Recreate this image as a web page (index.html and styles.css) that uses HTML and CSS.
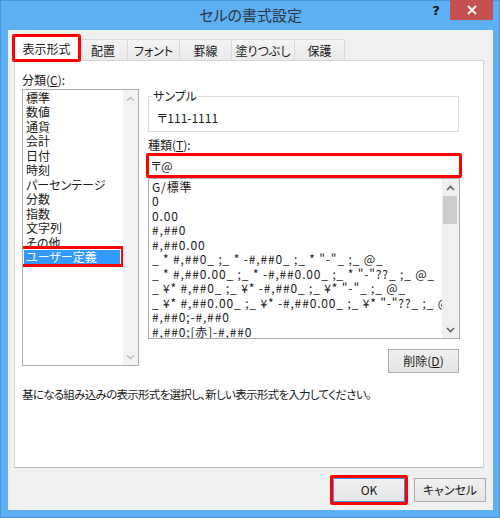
FILE: index.html
```html
<!DOCTYPE html>
<html lang="ja">
<head>
<meta charset="utf-8">
<title>セルの書式設定</title>
<link rel="stylesheet" href="styles.css">
</head>
<body>
<div class="window">
  <div class="titlebar">
    <div class="title-spacer"></div>
    <div class="title">セルの書式設定</div>
    <div class="controls">
      <span class="help">?</span>
      <span class="close"><svg width="10" height="10" viewBox="0 0 10 10"><path d="M1 1 L9 9 M9 1 L1 9" stroke="#fff" stroke-width="1.8" fill="none"/></svg></span>
    </div>
  </div>
  <div class="client">
    <div class="tabs">
      <div class="tab active hl">表示形式</div>
      <div class="tab">配置</div>
      <div class="tab">フォント</div>
      <div class="tab">罫線</div>
      <div class="tab">塗りつぶし</div>
      <div class="tab">保護</div>
    </div>
    <div class="panel">
      <div class="label">分類(<u>C</u>):</div>
      <div class="main">
        <div class="listbox cat">
          <ul class="items">
            <li>標準</li>
            <li>数値</li>
            <li>通貨</li>
            <li>会計</li>
            <li>日付</li>
            <li>時刻</li>
            <li>パーセンテージ</li>
            <li>分数</li>
            <li>指数</li>
            <li>文字列</li>
            <li>その他</li>
            <li class="selected hl">ユーザー定義</li>
          </ul>
          <div class="scrollbar disabled">
            <div class="arrow"><svg width="9" height="6" viewBox="0 0 9 6"><polyline points="1,5 4.5,1.5 8,5" fill="none" stroke="currentColor" stroke-width="1.6"/></svg></div>
            <div class="track"></div>
            <div class="arrow"><svg width="9" height="6" viewBox="0 0 9 6"><polyline points="1,1 4.5,4.5 8,1" fill="none" stroke="currentColor" stroke-width="1.6"/></svg></div>
          </div>
        </div>
        <div class="right">
          <fieldset class="sample">
            <legend>サンプル</legend>
            <div class="sample-text">〒111-1111</div>
          </fieldset>
          <div class="label label-type">種類(<u>T</u>):</div>
          <div class="input hl">〒@</div>
          <div class="listbox types">
            <ul class="items">
              <li>G/標準</li>
              <li>0</li>
              <li>0.00</li>
              <li>#,##0</li>
              <li>#,##0.00</li>
              <li>_ * #,##0_ ;_ * -#,##0_ ;_ * "-"_ ;_ @_</li>
              <li>_ * #,##0.00_ ;_ * -#,##0.00_ ;_ * "-"??_ ;_ @_</li>
              <li>_ ¥* #,##0_ ;_ ¥* -#,##0_ ;_ ¥* "-"_ ;_ @_</li>
              <li>_ ¥* #,##0.00_ ;_ ¥* -#,##0.00_ ;_ ¥* "-"??_ ;_ @_</li>
              <li>#,##0;-#,##0</li>
              <li>#,##0;[赤]-#,##0</li>
            </ul>
            <div class="scrollbar">
              <div class="arrow"><svg width="9" height="6" viewBox="0 0 9 6"><polyline points="1,5 4.5,1.5 8,5" fill="none" stroke="currentColor" stroke-width="1.6"/></svg></div>
              <div class="track"><div class="thumb"></div></div>
              <div class="arrow"><svg width="9" height="6" viewBox="0 0 9 6"><polyline points="1,1 4.5,4.5 8,1" fill="none" stroke="currentColor" stroke-width="1.6"/></svg></div>
            </div>
          </div>
          <div class="btn-row"><button class="btn btn-delete">削除(<u>D</u>)</button></div>
        </div>
      </div>
      <p class="desc">基になる組み込みの表示形式を選択し、新しい表示形式を入力してください。</p>
    </div>
    <div class="footer">
      <button class="btn btn-ok hl">OK</button>
      <button class="btn">キャンセル</button>
    </div>
  </div>
</div>
</body>
</html>
```

FILE: styles.css
```css
* { box-sizing: border-box; }
html, body { margin: 0; padding: 0; }
body {
  width: 500px;
  height: 518px;
  overflow: hidden;
  font-family: "Noto Sans CJK JP", "Noto Sans", sans-serif;
  font-size: 12px;
  color: #1a1a1a;
  font-feature-settings: "palt";
  background: #5eb0f4;
}
.window {
  width: 500px;
  height: 518px;
  background: #5eb0f4;
  padding: 0 7px 8px 8px;
  display: flex;
  flex-direction: column;
  box-shadow: inset 0 0 0 1px #4a94dc;
}
.titlebar {
  height: 30px;
  flex: none;
  display: grid;
  grid-template-columns: 1fr auto 1fr;
  align-items: start;
}
.title {
  font-size: 15px;
  line-height: 30px;
  color: #2e3640;
}
.controls {
  justify-self: end;
  display: flex;
  align-items: flex-start;
}
.help {
  width: 28px;
  height: 20px;
  text-align: center;
  font-family: "DejaVu Sans", sans-serif;
  font-weight: bold;
  font-size: 13px;
  line-height: 21px;
  color: #111;
}
.close {
  width: 43px;
  height: 20px;
  background: #c75050;
  display: flex;
  align-items: center;
  justify-content: center;
}
.client {
  flex: 1;
  background: #f0f0f0;
  padding: 6px 7px 0 6px;
  display: flex;
  flex-direction: column;
}
.tabs {
  height: 25px;
  display: flex;
  align-items: flex-end;
  margin-bottom: -1px;
  position: relative;
  z-index: 1;
}
.tab {
  height: 21px;
  margin-bottom: 1px;
  margin-left: -1px;
  border: 1px solid #d9d9d9;
  border-bottom: none;
  background: linear-gradient(#f4f4f4, #eaeaea);
  display: flex;
  align-items: center;
  justify-content: center;
  padding-top: 1px;
  white-space: nowrap;
}
.tab:nth-child(2) { width: 50px; }
.tab:nth-child(3) { width: 53px; }
.tab:nth-child(4) { width: 53px; }
.tab:nth-child(5) { width: 64px; }
.tab:nth-child(6) { width: 51px; }
.tab.active {
  width: 65px;
  height: 25px;
  margin-left: 0;
  margin-bottom: 0;
  background: #fff;
  padding-top: 0;
  padding-bottom: 1px;
  position: relative;
  z-index: 2;
}
.hl { position: relative; }
.hl::after {
  content: "";
  position: absolute;
  border: 3px solid #f00;
  border-radius: 2px;
  pointer-events: none;
}
.tab.active::after { top: -3px; left: -3px; right: -3px; bottom: -1px; }

.panel {
  height: 408px;
  margin-right: 2px;
  background: #fff;
  border: 1px solid #d5d5d5;
  border-bottom-color: #b9b9b9;
  padding: 12px 0 0 7px;
}
.label { line-height: 14px; }
.main {
  margin-top: 2px;
  display: grid;
  grid-template-columns: 117px 312px;
  column-gap: 9px;
  align-items: start;
}
.listbox {
  border: 1px solid #acacac;
  display: flex;
  background: #fff;
}
.items {
  list-style: none;
  margin: 0;
  padding: 1px 0 0 0;
  flex: 1;
  min-width: 0;
  overflow: hidden;
}
.items li {
  line-height: 14.45px;
  white-space: pre;
}
.cat { height: 277px; }
.cat .items li {
  margin: 0 3px 0 1px;
  padding-left: 2px;
}
.cat .items li.selected {
  background: #3399ff;
  color: #fff;
}
.cat .items li.selected::after { top: -4px; left: -4px; right: -4px; bottom: -3px; }

.scrollbar {
  flex: none;
  width: 17px;
  background: #f0f0f0;
  display: flex;
  flex-direction: column;
  color: #606060;
}
.scrollbar.disabled {
  width: 15px;
  background: #f3f3f3;
  color: #c4c4c4;
}
.arrow {
  height: 17px;
  display: flex;
  align-items: center;
  justify-content: center;
}
.track { flex: 1; }
.thumb {
  height: 28px;
  margin: 0 2px 0 1px;
  background: #cdcdcd;
}
.right {
  display: flex;
  flex-direction: column;
}
.sample {
  margin: 0 1px 0 0;
  padding: 0 0 6px 0;
  border: 1px solid #dcdcdc;
  min-width: 0;
}
.sample legend {
  padding: 0 1px;
  margin-left: 3px;
  line-height: 14px;
}
.sample-text {
  margin-top: 8px;
  padding-left: 8px;
  line-height: 14px;
}
.label-type { margin-top: 6px; }
.input {
  margin-top: 3px;
  height: 21px;
  border: 1px solid #abadb3;
  padding-left: 2px;
  line-height: 19px;
}
.input::after { top: -3px; left: -3px; right: -3px; bottom: -3px; }
.types {
  margin-top: 2px;
  height: 161px;
}
.types .items li {
  padding-left: 3px;
  letter-spacing: 0.85px;
}
.btn-row {
  margin-top: 10px;
  display: flex;
  justify-content: flex-end;
  padding-right: 1px;
}
.btn {
  width: 72px;
  height: 24px;
  padding: 0;
  border: 1px solid #acacac;
  background: linear-gradient(#f0f0f0, #e5e5e5);
  font: inherit;
  color: #1a1a1a;
  line-height: 20px;
}
.btn-delete { width: 71px; }
.desc {
  margin: 14px 0 0 0;
  line-height: 14px;
  font-size: 11.5px;
  letter-spacing: -0.7px;
}
.footer {
  margin-top: 10px;
  display: flex;
  justify-content: flex-end;
  gap: 9px;
}
.btn-ok { border-color: #3c93e0; }
.btn-ok::after { top: -4px; left: -4px; right: -4px; bottom: -4px; }
```
